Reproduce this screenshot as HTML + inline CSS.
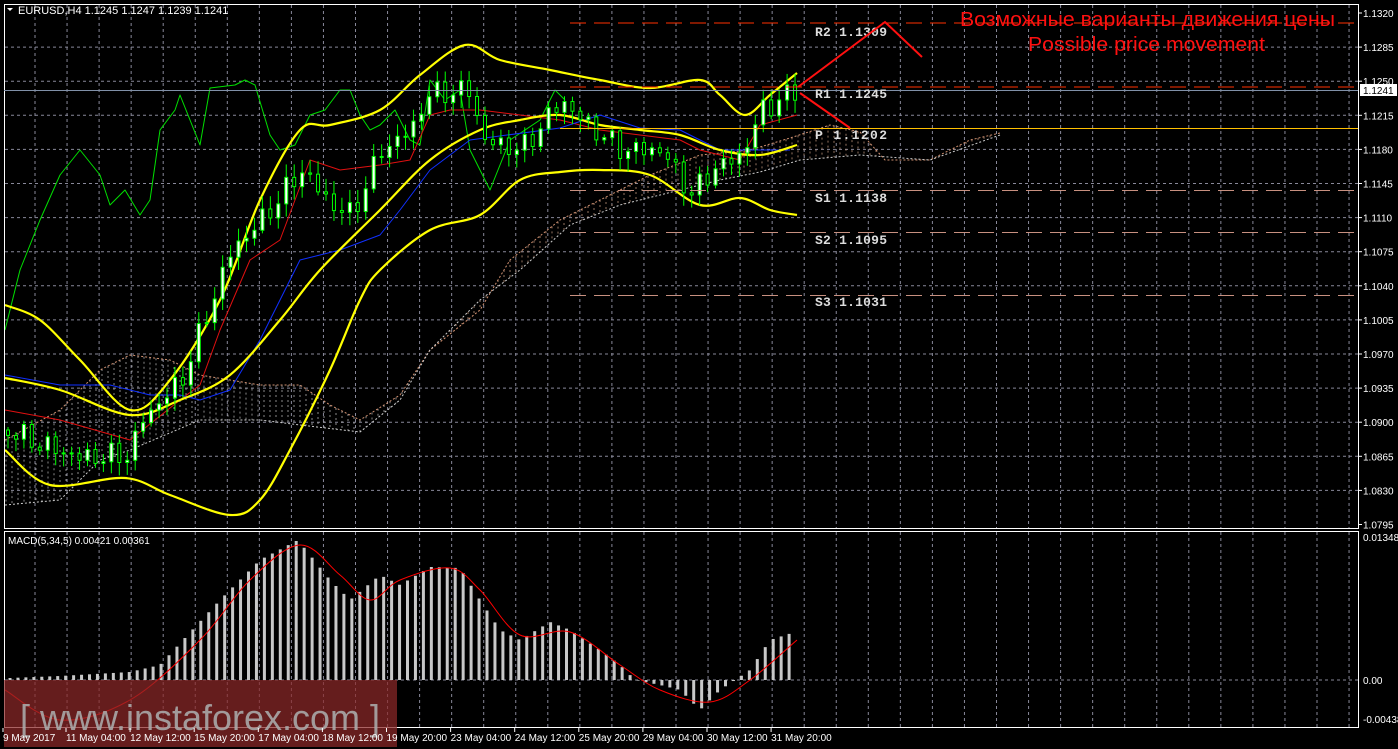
<!DOCTYPE html>
<html><head><meta charset="utf-8"><style>
html,body{margin:0;padding:0;background:#000;width:1398px;height:749px;overflow:hidden}
svg{display:block}
.sans{font-family:"Liberation Sans",sans-serif}
.mono{font-family:"Liberation Mono",monospace}
</style></head><body>
<svg id="s" width="1398" height="749" xmlns="http://www.w3.org/2000/svg" class="sans">
<rect width="1398" height="749" fill="#000"/>
<g id="grid"></g>
<g id="cloud"></g>
<g id="lines"></g>
<g id="candles"></g>
<g id="macd"></g>
<rect x="4.5" y="4.5" width="1354" height="524" fill="none" stroke="#fff"/>
<rect x="4.5" y="531.5" width="1354" height="196" fill="none" stroke="#fff"/>
<line x1="570" y1="23" x2="1358" y2="23" stroke="#ff3000" stroke-dasharray="16 8"/>
<line x1="570" y1="87" x2="1358" y2="87" stroke="#ff3000" stroke-dasharray="16 8"/>
<line x1="4" y1="90.5" x2="1358" y2="90.5" stroke="#8090a8"/>
<line x1="560" y1="128.5" x2="1358" y2="128.5" stroke="#ffc000"/>
<line x1="570" y1="190.5" x2="1358" y2="190.5" stroke="#c89080" stroke-dasharray="16 8"/>
<line x1="570" y1="232.5" x2="1358" y2="232.5" stroke="#c89080" stroke-dasharray="16 8"/>
<line x1="570" y1="295.5" x2="1358" y2="295.5" stroke="#c89080" stroke-dasharray="16 8"/>
<g class="mono" font-size="13" fill="#ddd" font-weight="bold">
<text x="815" y="36" textLength="72">R2 1.1309</text>
<text x="815" y="98" textLength="72">R1 1.1245</text>
<text x="815" y="139" textLength="72">P  1.1202</text>
<text x="815" y="202" textLength="72">S1 1.1138</text>
<text x="815" y="244" textLength="72">S2 1.1095</text>
<text x="815" y="306" textLength="72">S3 1.1031</text>
</g>
<polyline points="798,87 885,22 922,57" fill="none" stroke="#ff1010" stroke-width="2"/>
<line x1="800" y1="93" x2="850" y2="128" stroke="#ff1010" stroke-width="2"/>
<text x="960" y="26" font-size="20" fill="#ff1010" textLength="375" lengthAdjust="spacingAndGlyphs">Возможные варианты движения цены</text>
<text x="1028" y="51" font-size="20" fill="#ff1010" textLength="237" lengthAdjust="spacingAndGlyphs">Possible price movement</text>
<polygon points="7,8 13,8 10,11" fill="#fff"/>
<text x="18" y="14" font-size="11" fill="#fff">EURUSD,H4  1.1245 1.1247 1.1239 1.1241</text>
<text x="8" y="544" font-size="10" fill="#fff">MACD(5,34,5) 0.00421 0.00361</text>
<g id="axis" font-size="10" fill="#fff"></g>
<rect x="1360" y="84" width="37" height="12" fill="#fff"/>
<text x="1363" y="94" font-size="10" fill="#000">1.1241</text>
<rect x="4" y="680" width="393" height="67" fill="rgba(140,40,40,0.72)"/>
<text x="200" y="730" font-size="36" fill="#a8a8a8" text-anchor="middle" fill-opacity="0.9">[ www.instaforex.com ]</text>
<g id="time" font-size="10" fill="#fff"></g>
</svg>
<script>
const NS="http://www.w3.org/2000/svg";
function el(p,t,a){const e=document.createElementNS(NS,t);for(const k in a)e.setAttribute(k,a[k]);p.appendChild(e);return e;}
const g=id=>document.getElementById(id);
const grid=g('grid');
for(let x=35;x<1358;x+=32.05){el(grid,'line',{x1:x,y1:5,x2:x,y2:528,stroke:'#889',"stroke-dasharray":'3 3'});el(grid,'line',{x1:x,y1:532,x2:x,y2:727,stroke:'#889',"stroke-dasharray":'3 3'});}
const labs=['1.1320','1.1285','1.1250','1.1215','1.1180','1.1145','1.1110','1.1075','1.1040','1.1005','1.0970','1.0935','1.0900','1.0865','1.0830','1.0795'];
const ax=g('axis');
labs.forEach((l,i)=>{const y=13+i*34.1;if(i>0&&i<15)el(grid,'line',{x1:5,y1:y,x2:1358,y2:y,stroke:'#889',"stroke-dasharray":'3 3'});el(ax,'line',{x1:1358,y1:y,x2:1362,y2:y,stroke:'#fff'});const t=el(ax,'text',{x:1363,y:y+4});t.textContent=l;});
el(grid,'line',{x1:5,y1:680,x2:1358,y2:680,stroke:'#889',"stroke-dasharray":'3 3'});
[['0.01348',541],['0.00',684],['-0.00438',723]].forEach(a=>{const t=el(ax,'text',{x:1363,y:a[1]});t.textContent=a[0];});
const tl=['9 May 2017','11 May 04:00','12 May 12:00','15 May 20:00','17 May 04:00','18 May 12:00','19 May 20:00','23 May 04:00','24 May 12:00','25 May 20:00','29 May 04:00','30 May 12:00','31 May 20:00'];
tl.forEach((l,i)=>{const x=i==0?3:66+(i-1)*64.1;const t=el(g('time'),'text',{x:x,y:741,"font-size":10});t.textContent=l;el(g('time'),'line',{x1:x,y1:728,x2:x,y2:732,stroke:'#fff'});});
function interp(pts,x){if(x<=pts[0][0])return pts[0][1];for(let i=1;i<pts.length;i++){if(x<=pts[i][0]){const a=pts[i-1],b=pts[i];return a[1]+(b[1]-a[1])*(x-a[0])/(b[0]-a[0]);}}return pts[pts.length-1][1];}
function smooth(pts){let d='M'+pts[0][0]+','+pts[0][1];for(let i=0;i<pts.length-1;i++){const p0=pts[i-1]||pts[i],p1=pts[i],p2=pts[i+1],p3=pts[i+2]||p2;const c1=[p1[0]+(p2[0]-p0[0])/6,p1[1]+(p2[1]-p0[1])/6],c2=[p2[0]-(p3[0]-p1[0])/6,p2[1]-(p3[1]-p1[1])/6];d+=` C${c1[0]},${c1[1]} ${c2[0]},${c2[1]} ${p2[0]},${p2[1]}`;}return d;}
function pl(par,pts,col,w,extra,sm){if(sm){el(par,'path',Object.assign({d:smooth(pts),fill:'none',stroke:col,"stroke-width":w},extra||{}));return;}el(par,'polyline',Object.assign({points:pts.map(p=>p.join(',')).join(' '),fill:'none',stroke:col,"stroke-width":w,"stroke-linejoin":'round'},extra||{}));}
const cu=[[5,440],[60,410],[100,370],[130,355],[170,360],[200,375],[260,385],[300,385],[330,405],[360,420],[400,395],[430,350],[480,310],[510,260],[560,220],[600,200],[650,175],[700,155],[750,150],[790,138],[830,125],[860,132],[885,160],[930,160],[970,140],[1000,133]];
const cl=[[5,505],[60,500],[100,460],[130,450],[200,420],[260,420],[300,425],[360,432],[400,400],[430,350],[480,300],[520,270],[570,225],[620,205],[680,190],[720,180],[760,172],[800,160],[860,155],[930,160],[1000,135]];
const cg=g('cloud');
for(let x=6;x<1000;x+=6){const a=interp(cu,x),b=interp(cl,x);if(Math.abs(b-a)>3)el(cg,'line',{x1:x,y1:Math.min(a,b),x2:x,y2:Math.max(a,b),stroke:x>430?'#b89078':'#aaa',"stroke-dasharray":'2 3',"stroke-width":1,"stroke-opacity":0.8});}
pl(cg,cu,'#d09070',1,{"stroke-dasharray":'2 2'});pl(cg,cl,'#ccc',1,{"stroke-dasharray":'2 2'});
const L=g('lines');
pl(L,[[5,330],[20,270],[40,220],[60,175],[80,150],[100,175],[110,205],[125,190],[140,215],[150,200],[160,130],[175,110],[180,95],[200,145],[210,88],[235,85],[245,80],[255,85],[270,135],[280,150],[295,145],[310,115],[325,110],[340,90],[350,90],[360,115],[370,130],[380,125],[395,110],[410,140],[420,145],[430,80],[445,100],[460,90],[470,150],[490,190],[510,140],[540,120],[555,90],[565,100]],'#00e000',1);
pl(L,[[5,410],[60,420],[130,440],[180,400],[200,385],[220,330],[250,260],[280,240],[310,160],[340,170],[380,165],[410,160],[430,115],[450,110],[480,110],[520,115],[560,120],[600,130],[640,135],[680,140],[700,150],[740,160],[760,125],[797,115]],'#e01010',1);
pl(L,[[5,375],[60,385],[110,385],[150,395],[180,395],[200,400],[230,390],[260,340],[300,260],[340,250],[380,235],[400,210],[430,170],[470,140],[560,128],[600,115],[640,128],[680,130],[720,150],[760,150],[790,150]],'#1030ff',1);
pl(L,[[5,305],[40,320],[80,360],[130,410],[170,380],[220,300],[260,200],[300,130],[330,125],[380,110],[420,75],[465,45],[500,60],[550,70],[600,80],[650,88],[700,80],[720,95],[745,115],[770,95],[797,73]],'#ffff00',2.2,{},true);
pl(L,[[5,378],[60,390],[130,415],[180,400],[230,375],[280,320],[320,270],[380,210],[430,160],[480,130],[520,120],[560,115],[600,125],[640,130],[680,135],[720,150],[760,155],[797,145]],'#ffff00',2.2,{},true);
pl(L,[[5,450],[50,485],[125,478],[170,495],[230,515],[260,500],[290,450],[330,370],[360,300],[380,270],[430,230],[480,215],[520,180],[560,172],[600,170],[650,175],[700,205],[740,198],[770,210],[797,215]],'#ffff00',2.2,{},true);
const pp=[[5,430],[40,445],[80,458],[128,455],[140,420],[180,380],[230,250],[260,220],[300,170],[330,205],[350,215],[380,150],[410,130],[425,95],[470,90],[480,140],[520,150],[560,100],[580,120],[620,150],[660,150],[690,195],[710,170],[740,155],[760,110],[795,90]];
const C=g('candles');let prev=interp(pp,5);
for(let i=0;i<100;i++){const x=6+i*7.95;const n=Math.sin(i*2.3)*8+Math.cos(i*1.7)*5;const c=interp(pp,x)+n;const o=prev;prev=c;const top=Math.min(o,c),bot=Math.max(o,c);const hi=top-3-Math.abs(Math.sin(i*3.1))*10,lo=bot+3+Math.abs(Math.cos(i*2.7))*10;
el(C,'line',{x1:x+2,y1:hi,x2:x+2,y2:lo,stroke:'#00ff00'});el(C,'rect',{x:x+0.5,y:top,width:3,height:Math.max(1,bot-top),fill:c<o?'#fff':'#000',stroke:'#00ff00'});}
const mh=[[10,678],[60,676],[130,672],[160,665],[220,600],[260,560],[298,540],[330,580],[350,600],[380,575],[400,585],[430,567],[460,568],[480,600],[500,630],[520,640],[550,622],[570,630],[600,650],[620,665],[635,680],[660,685],[680,690],[700,710],[720,690],[750,670],[770,640],[795,632]];
const M=g('macd');
for(let x=10;x<=797;x+=7.95){const y=interp(mh,x);el(M,'line',{x1:x,y1:680,x2:x,y2:y,stroke:'#c8c8c8',"stroke-width":3});}
pl(M,[[5,690],[60,720],[130,700],[200,640],[250,580],[300,545],[340,575],[370,600],[400,580],[450,568],[480,590],[520,635],[570,632],[620,665],[660,690],[710,702],[750,680],[797,640]],'#ff0000',1,{},true);
</script>
</body></html>
